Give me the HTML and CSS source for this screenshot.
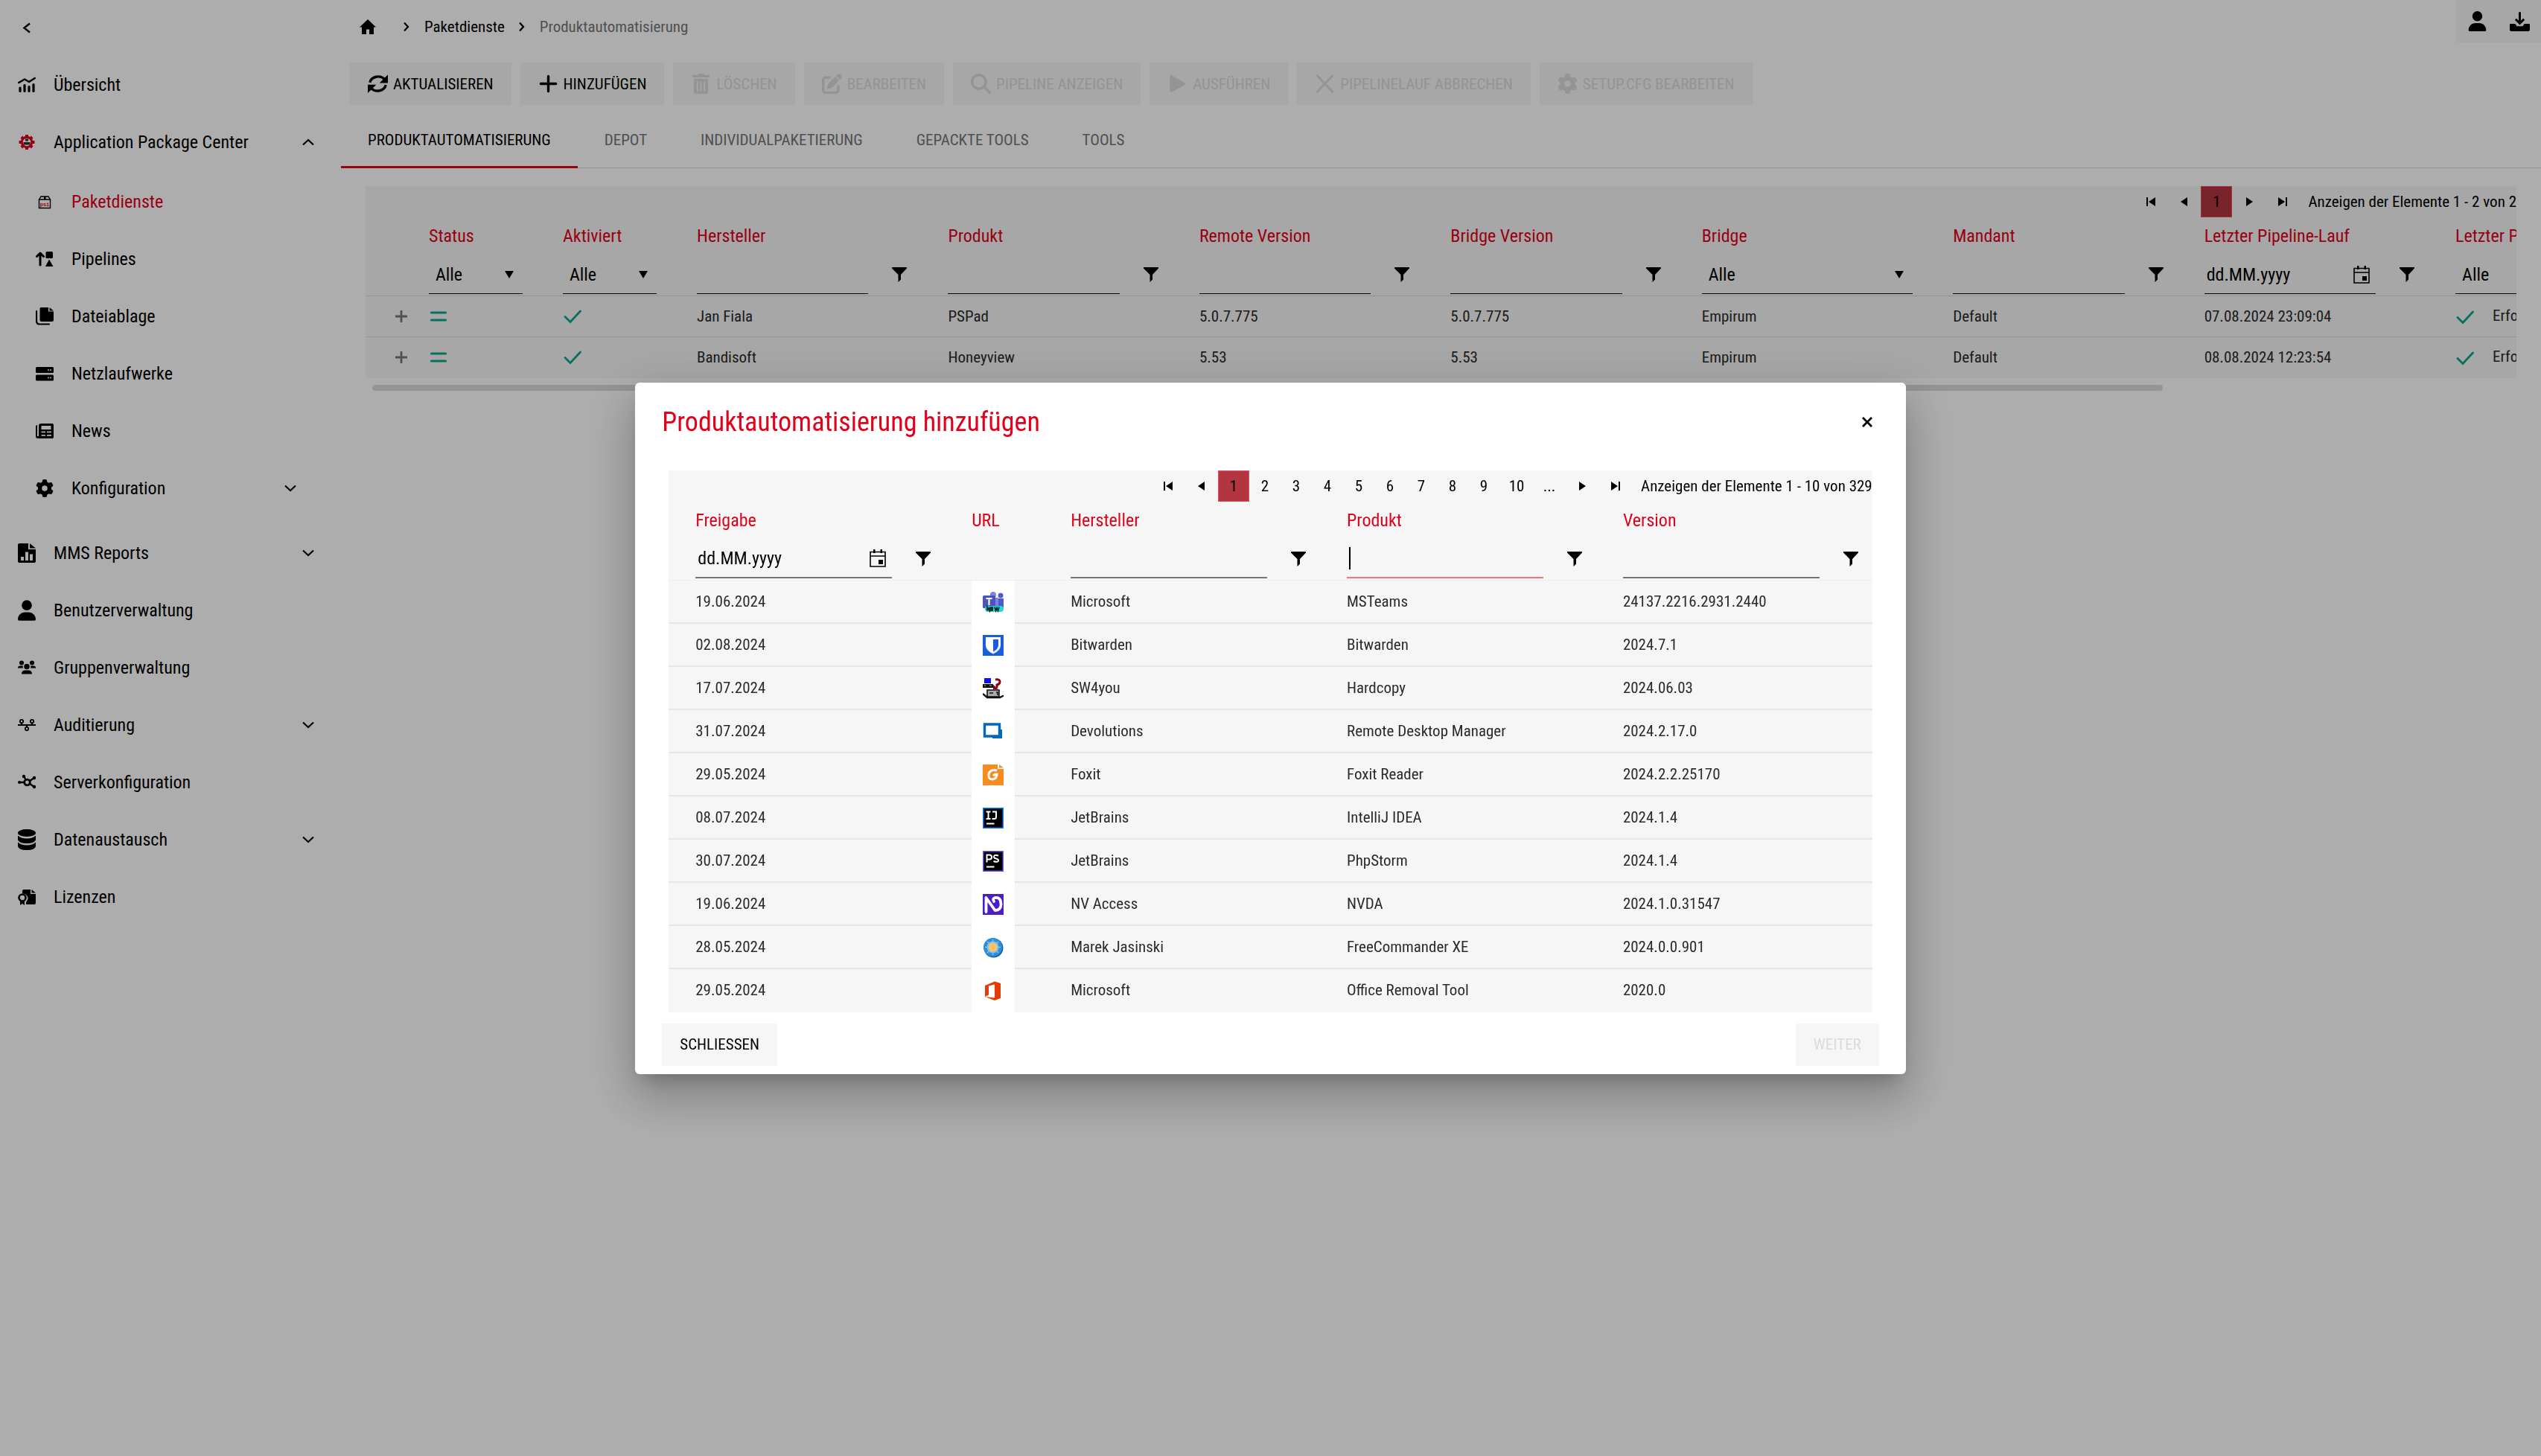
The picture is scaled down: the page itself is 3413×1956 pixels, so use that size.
FILE: index.html
```html
<!DOCTYPE html>
<html lang="de">
<head>
    <meta charset="UTF-8">
    <title>Produktautomatisierung</title>

    <link rel="stylesheet" href="styles.css">
</head>

<body>

    <!-- icon sprite -->
    <svg class="sprite" aria-hidden="true">
        <symbol id="i-left" viewBox="0 0 24 24"><path d="M16 6.500 8.500 12.500l7.500 6" fill="none" stroke="currentColor" stroke-width="2.400"/></symbol>
        <symbol id="i-right" viewBox="0 0 24 24"><path d="M9 6.500l5 5.500-5 5.500" fill="none" stroke="currentColor" stroke-width="2.200"/></symbol>
        <symbol id="i-down" viewBox="0 0 24 24"><path d="M5 8.500l7 6.500 7-6.500" fill="none" stroke="currentColor" stroke-width="2.200"/></symbol>
        <symbol id="i-up" viewBox="0 0 24 24"><path d="M5 15.500l7-6.500 7 6.500" fill="none" stroke="currentColor" stroke-width="2.200"/></symbol>
        <symbol id="i-chart" viewBox="0 0 24 24">
            <path d="M1.300 9 9 4.500l6 3.500 7.700-5" fill="none" stroke="currentColor" stroke-width="2.600" stroke-linecap="round" stroke-linejoin="round"/>
            <path d="M3 16v4.500M9 12.500v8M15 14.500v6M21 11.500v9" stroke="currentColor" stroke-width="3.200" stroke-linecap="round"/>
        </symbol>
        <symbol id="i-apc" viewBox="0 0 24 24">
            <circle cx="12" cy="12" r="6.800" fill="none" stroke="#e2001a" stroke-width="3"/>
            <path d="M12 2v4M12 18v4M1.500 12h4M18.500 12h4M4.800 5l2.800 2.800M16.400 16.200l2.800 2.800M4.800 19l2.800-2.800M16.400 7.800l2.800-2.800" stroke="#e2001a" stroke-width="4"/>
            <path d="M10 7.500h4v3h-4zM7.500 12h9v3.500h-9z" fill="#333"/>
        </symbol>
        <symbol id="i-box" viewBox="0 0 24 24">
            <path d="M4.500 9h15v11.500h-15zM4.500 9 7 5h10l2.500 4" fill="none" stroke="#000" stroke-width="1.400"/>
            <path d="M11 5h2.500v4H11z" fill="#000"/>
            <text x="12" y="17.500" text-anchor="middle" font-family="Liberation Mono, monospace" font-size="7" font-weight="bold" fill="#e2001a">psi</text>
        </symbol>
        <symbol id="i-pipes" viewBox="0 0 24 24">
            <path d="M6 20V5M1.500 8.500 6 4l4.500 4.500" fill="none" stroke="currentColor" stroke-width="3" stroke-linecap="round" stroke-linejoin="round"/>
            <rect x="13.500" y="2" width="9.500" height="9" rx="1.500"/>
            <path d="M18 12.500 23.500 22h-10.500z"/>
        </symbol>
        <symbol id="i-files" viewBox="0 0 24 24">
            <path d="M7 0h10v5.500h7V17q0 2-2 2H7.500q-2 0-2-2V2q0-2 1.500-2z"/>
            <path d="M18.500 0 24 4.500h-5.500z"/>
            <path d="M1 5v13q0 4.500 4.500 4.500H18" fill="none" stroke="currentColor" stroke-width="2.200" stroke-linecap="round"/>
        </symbol>
        <symbol id="i-server" viewBox="0 0 24 24">
            <path d="M1.500 3h21q1.500 0 1.500 1.500v5q0 1.500-1.500 1.500h-21Q0 11 0 9.500v-5Q0 3 1.500 3zM1.500 13.500h21q1.500 0 1.500 1.500v5q0 1.500-1.500 1.500h-21Q0 21.500 0 20v-5q0-1.500 1.500-1.500z"/>
            <g fill="#fff"><circle cx="17" cy="7" r="1"/><circle cx="20" cy="7" r="1"/><circle cx="17" cy="17.500" r="1"/><circle cx="20" cy="17.500" r="1"/></g>
        </symbol>
        <symbol id="i-news" viewBox="0 0 24 24">
            <path fill-rule="evenodd" d="M7 2h15q2 0 2 2v16q0 2-2 2H3q-3 0-3-3V6q0-2 2-2v15h2V5q0-3 3-3zM7.500 5v5h13V5zM7.500 12.500v1.800h5.500v-1.800zM15 12.500v1.800h6v-1.800zM7.500 17v1.800h5.500V17zM15 17v1.800h6V17z"/>
        </symbol>
        <symbol id="i-gear" viewBox="0 0 512 512"><path d="M495.900 166.600c3.200 8.700.5 18.400-6.400 24.600l-43.300 39.400c1.100 8.300 1.700 16.800 1.700 25.400s-.6 17.100-1.700 25.400l43.300 39.400c6.900 6.200 9.600 15.900 6.400 24.600-4.400 11.900-9.700 23.300-15.800 34.300l-4.700 8.100c-6.600 11-14 21.400-22.100 31.200-5.900 7.200-15.700 9.600-24.500 6.800l-55.700-17.700c-13.400 10.300-28.200 18.900-44 25.400l-12.500 57.100c-2 9.100-9 16.300-18.200 17.800-13.800 2.300-28 3.500-42.500 3.500s-28.700-1.200-42.500-3.500c-9.200-1.500-16.200-8.700-18.200-17.800l-12.500-57.100c-15.800-6.500-30.600-15.100-44-25.400l-55.700 17.800c-8.800 2.800-18.600.3-24.500-6.800-8.100-9.800-15.500-20.200-22.100-31.200l-4.700-8.100c-6.100-11-11.400-22.400-15.800-34.300-3.200-8.700-.5-18.400 6.400-24.600l43.300-39.400C64.600 273.100 64 264.600 64 256s.6-17.100 1.700-25.400L22.400 191.200c-6.900-6.200-9.600-15.900-6.400-24.600 4.400-11.900 9.700-23.300 15.800-34.300l4.700-8.100c6.600-11 14-21.400 22.100-31.200 5.900-7.200 15.700-9.600 24.500-6.800l55.700 17.700c13.400-10.300 28.200-18.900 44-25.400l12.500-57.100c2-9.100 9-16.300 18.200-17.800C227.300 1.200 241.500 0 256 0s28.700 1.200 42.500 3.500c9.200 1.500 16.200 8.700 18.200 17.800l12.500 57.100c15.800 6.500 30.600 15.100 44 25.400l55.700-17.700c8.800-2.800 18.600-.3 24.500 6.800 8.100 9.800 15.500 20.200 22.100 31.200l4.700 8.100c6.100 11 11.400 22.400 15.800 34.300zM256 336a80 80 0 1 0 0-160 80 80 0 1 0 0 160z"/></symbol>
        <symbol id="i-report" viewBox="0 0 24 28">
            <path fill-rule="evenodd" d="M2 1h12v8h10v16q0 2-2 2H2q-2 0-2-2V3q0-2 2-2zM4 19v5h4v-5zM10 12.500V24h4V12.500zM16 15.500V24h4v-8.500z"/>
            <path d="M16 1l8 6.500h-8z"/>
        </symbol>
        <symbol id="i-user" viewBox="0 0 448 512"><path d="M224 256A128 128 0 1 0 224 0a128 128 0 1 0 0 256zm-45.700 48C79.800 304 0 383.800 0 482.300 0 498.700 13.300 512 29.700 512h388.600c16.400 0 29.700-13.300 29.700-29.700C448 383.800 368.200 304 269.700 304z"/></symbol>
        <symbol id="i-group" viewBox="0 0 24 24">
            <circle cx="5" cy="5.500" r="3"/><circle cx="19" cy="5.500" r="3"/><circle cx="12" cy="10.500" r="3.700"/>
            <path d="M0 12.500q0-3 3-3h4q-.8 1.500 0 3zM24 12.500q0-3-3-3h-4q.8 1.500 0 3zM5 20.500q0-5 5-5h4q5 0 5 5z"/>
        </symbol>
        <symbol id="i-audit" viewBox="0 0 24 24">
            <path d="M0 12h24M5 12V9M19 12V9M12 12v3" stroke="currentColor" stroke-width="2"/>
            <g fill="none" stroke="currentColor" stroke-width="1.800"><circle cx="5" cy="7" r="2.200"/><circle cx="19" cy="7" r="2.200"/><circle cx="12" cy="17" r="2.200"/></g>
        </symbol>
        <symbol id="i-nodes" viewBox="0 0 24 24">
            <path d="M2 12h7M8 4l3 5M22 6l-6 4M22 18l-6-4" stroke="currentColor" stroke-width="2.400"/>
            <circle cx="12.500" cy="12" r="3.800" fill="none" stroke="currentColor" stroke-width="2.800"/>
            <circle cx="2" cy="12" r="2"/><circle cx="8" cy="4" r="2.200"/><circle cx="22" cy="6" r="2.200"/><circle cx="22" cy="18" r="2.200"/>
        </symbol>
        <symbol id="i-db" viewBox="0 0 24 28">
            <ellipse cx="12" cy="5" rx="12" ry="5"/>
            <path d="M0 8.500q4 4 12 4t12-4V14q-1 5-12 5T0 14zM0 17.500q4 4 12 4t12-4V23q-1 5-12 5T0 23z"/>
        </symbol>
        <symbol id="i-license" viewBox="0 0 24 24">
            <path d="M8 2h9v6h7v12q0 2-2 2H11v-3q5-6 0-10-2-2-5-1.500V4q0-2 2-2z"/><path d="M18.500 2 24 6.500h-5.500z"/>
            <circle cx="6" cy="13" r="4.500" fill="#fff" stroke="currentColor" stroke-width="2.600"/><path d="M3 17.500h6V23l-3-2-3 2z"/>
        </symbol>
        <symbol id="i-home" viewBox="0 0 24 24"><path d="M12 2 1 12.500h3V22h6v-6.500h4V22h6v-9.500h3z"/></symbol>
        <symbol id="i-refresh" viewBox="0 0 24 24">
            <path d="M2.500 10.500a10 8.500 0 0 1 17.500-4M21.500 13.500a10 8.500 0 0 1-17.500 4" fill="none" stroke="currentColor" stroke-width="3"/>
            <path d="M24 1v10H14zM0 23V13h10z"/>
        </symbol>
        <symbol id="i-plus" viewBox="0 0 24 24"><path d="M12 3v18M3 12h18" stroke="currentColor" stroke-width="3" stroke-linecap="round"/></symbol>
        <symbol id="i-trash" viewBox="0 0 24 24"><path fill-rule="evenodd" d="M9 0h6l1 1.500h6v3H2v-3h6zM3.500 6h17v16q0 2-2 2h-13q-2 0-2-2zM7 9v12h1.500V9zM11.200 9v12h1.500V9zM15.500 9v12H17V9z"/></symbol>
        <symbol id="i-edit" viewBox="0 0 512 512"><path d="M471.600 21.700c-21.900-21.900-57.300-21.900-79.200 0l-30.100 30 97.900 97.900 30.100-30.100c21.900-21.900 21.900-57.300 0-79.200zm-299.200 220c-6.100 6.100-10.800 13.600-13.500 21.900l-29.600 88.800c-2.900 8.600-.6 18.100 5.800 24.600s15.900 8.700 24.600 5.800l88.800-29.600c8.200-2.700 15.700-7.400 21.900-13.500l167.300-167.400-98-98zM96 64C43 64 0 107 0 160v256c0 53 43 96 96 96h256c53 0 96-43 96-96v-96c0-17.700-14.300-32-32-32s-32 14.300-32 32v96c0 17.700-14.300 32-32 32H96c-17.700 0-32-14.300-32-32V160c0-17.700 14.300-32 32-32h96c17.700 0 32-14.300 32-32s-14.300-32-32-32z"/></symbol>
        <symbol id="i-search" viewBox="0 0 512 512"><path d="M416 208c0 45.900-14.900 88.300-40 122.700l126.600 126.700c12.500 12.500 12.500 32.800 0 45.300s-32.800 12.500-45.300 0L330.700 376c-34.400 25.200-76.800 40-122.700 40C93.100 416 0 322.900 0 208S93.100 0 208 0s208 93.100 208 208zM208 352a144 144 0 1 0 0-288 144 144 0 1 0 0 288z"/></symbol>
        <symbol id="i-play" viewBox="0 0 24 24"><path d="M3 3q0-2 2-1l16 9q1.500 1 0 2L5 22q-2 1-2-1z"/></symbol>
        <symbol id="i-x" viewBox="0 0 24 24"><path d="M3 2.500l18 19M21 2.500l-18 19" stroke="currentColor" stroke-width="2.600" stroke-linecap="round"/></symbol>
        <symbol id="i-close" viewBox="0 0 16 16"><path d="M2 2l12 12M14 2 2 14" stroke="currentColor" stroke-width="2.800"/></symbol>
        <symbol id="i-download" viewBox="0 0 24 24">
            <path d="M12 1v13M7 9.500l5 5 5-5" fill="none" stroke="currentColor" stroke-width="2.600"/>
            <path d="M1 15h5.500l2 3h7l2-3H23q1 0 1 1v6q0 2-2 2H2q-2 0-2-2v-6q0-1 1-1z"/>
        </symbol>
        <symbol id="i-first" viewBox="0 0 16 16"><path d="M2 2h2v12H2zM14 2v12L5 8z"/></symbol>
        <symbol id="i-prev" viewBox="0 0 16 16"><path d="M12 2v12L3 8z"/></symbol>
        <symbol id="i-next" viewBox="0 0 16 16"><path d="M4 2v12l9-6z"/></symbol>
        <symbol id="i-last" viewBox="0 0 16 16"><path d="M12 2h2v12h-2zM2 2v12l9-6z"/></symbol>
        <symbol id="i-caret" viewBox="0 0 12 10"><path d="M0 0h12L6 10z"/></symbol>
        <symbol id="i-filter" viewBox="0 0 20 22"><path d="M0 1h20v1.500L12 11v6.500L8.500 21V11L0 2.500z"/></symbol>
        <symbol id="i-calendar" viewBox="0 0 22 24">
            <path d="M1 3.500h20V23H1zM1 9h20" fill="none" stroke="currentColor" stroke-width="1.600"/><path d="M5 0h2.500v5H5zM14.500 0H17v5h-2.500zM12 14h6v6h-6z"/>
        </symbol>
        <symbol id="i-expand" viewBox="0 0 24 24"><path d="M12 4v16M4 12h16" stroke="currentColor" stroke-width="2.800"/></symbol>
        <symbol id="i-equal" viewBox="0 0 24 24"><path d="M2.500 7h19M2.500 17h19" stroke="currentColor" stroke-width="3.200" stroke-linecap="round"/></symbol>
        <symbol id="i-check" viewBox="0 0 24 24"><path d="M2 12.500l7 7L22.500 5" fill="none" stroke="currentColor" stroke-width="2.800" stroke-linecap="round"/></symbol>
    </svg>

    <div class="app">

        <nav class="sidebar">
            <button class="collapse" aria-label="Menü einklappen"><svg><use href="#i-left"/></svg></button>

            <a class="nav-item" href="#"><svg><use href="#i-chart"/></svg><span>Übersicht</span></a>
            <a class="nav-item" href="#"><svg><use href="#i-apc"/></svg><span>Application Package Center</span><svg class="chevron"><use href="#i-up"/></svg></a>

            <div class="subnav">
                <a class="nav-item active" href="#"><svg><use href="#i-box"/></svg><span>Paketdienste</span></a>
                <a class="nav-item" href="#"><svg><use href="#i-pipes"/></svg><span>Pipelines</span></a>
                <a class="nav-item" href="#"><svg><use href="#i-files"/></svg><span>Dateiablage</span></a>
                <a class="nav-item" href="#"><svg><use href="#i-server"/></svg><span>Netzlaufwerke</span></a>
                <a class="nav-item" href="#"><svg><use href="#i-news"/></svg><span>News</span></a>
                <a class="nav-item" href="#"><svg><use href="#i-gear"/></svg><span>Konfiguration</span><svg class="chevron"><use href="#i-down"/></svg></a>
            </div>

            <a class="nav-item" href="#"><svg class="tall"><use href="#i-report"/></svg><span>MMS Reports</span><svg class="chevron"><use href="#i-down"/></svg></a>
            <a class="nav-item" href="#"><svg class="tall"><use href="#i-user"/></svg><span>Benutzerverwaltung</span></a>
            <a class="nav-item" href="#"><svg><use href="#i-group"/></svg><span>Gruppenverwaltung</span></a>
            <a class="nav-item" href="#"><svg><use href="#i-audit"/></svg><span>Auditierung</span><svg class="chevron"><use href="#i-down"/></svg></a>
            <a class="nav-item" href="#"><svg><use href="#i-nodes"/></svg><span>Serverkonfiguration</span></a>
            <a class="nav-item" href="#"><svg class="tall"><use href="#i-db"/></svg><span>Datenaustausch</span><svg class="chevron"><use href="#i-down"/></svg></a>
            <a class="nav-item" href="#"><svg><use href="#i-license"/></svg><span>Lizenzen</span></a>
        </nav>

        <main class="content">
            <header class="topbar">
                <div class="breadcrumb">
                    <a href="#" aria-label="Start"><svg><use href="#i-home"/></svg></a>
                    <svg class="sep"><use href="#i-right"/></svg>
                    <a href="#">Paketdienste</a>
                    <svg class="sep"><use href="#i-right"/></svg>
                    <span class="current">Produktautomatisierung</span>
                </div>
                <div class="account">
                    <button aria-label="Benutzer"><svg><use href="#i-user"/></svg></button>
                    <button aria-label="Download"><svg><use href="#i-download"/></svg></button>
                </div>
            </header>

            <div class="toolbar">
                <button class="btn"><svg><use href="#i-refresh"/></svg>AKTUALISIEREN</button>
                <button class="btn"><svg><use href="#i-plus"/></svg>HINZUFÜGEN</button>
                <button class="btn" disabled><svg><use href="#i-trash"/></svg>LÖSCHEN</button>
                <button class="btn" disabled><svg><use href="#i-edit"/></svg>BEARBEITEN</button>
                <button class="btn" disabled><svg><use href="#i-search"/></svg>PIPELINE ANZEIGEN</button>
                <button class="btn" disabled><svg><use href="#i-play"/></svg>AUSFÜHREN</button>
                <button class="btn" disabled><svg><use href="#i-x"/></svg>PIPELINELAUF ABBRECHEN</button>
                <button class="btn" disabled><svg><use href="#i-gear"/></svg>SETUP.CFG BEARBEITEN</button>
            </div>

            <div class="tabs">
                <button class="tab selected">PRODUKTAUTOMATISIERUNG</button>
                <button class="tab">DEPOT</button>
                <button class="tab">INDIVIDUALPAKETIERUNG</button>
                <button class="tab">GEPACKTE TOOLS</button>
                <button class="tab">TOOLS</button>
            </div>

            <section class="grid main-grid">
                <div class="pager">
                    <button class="arrow" aria-label="Erste Seite"><svg><use href="#i-first"/></svg></button>
                    <button class="arrow" aria-label="Vorherige Seite"><svg><use href="#i-prev"/></svg></button>
                    <button class="page current">1</button>
                    <button class="arrow" aria-label="Nächste Seite"><svg><use href="#i-next"/></svg></button>
                    <button class="arrow" aria-label="Letzte Seite"><svg><use href="#i-last"/></svg></button>
                    <span class="info">Anzeigen der Elemente 1 - 2 von 2</span>
                </div>
                <table class="packages">
                    <colgroup><col class="col-expand"><col class="col-small"><col class="col-small"><col><col><col><col><col><col><col><col><col></colgroup>
                    <thead>
                        <tr class="titles">
                            <th></th><th>Status</th><th>Aktiviert</th><th>Hersteller</th><th>Produkt</th><th>Remote Version</th><th>Bridge Version</th><th>Bridge</th><th>Mandant</th><th>Letzter Pipeline-Lauf</th><th>Letzter Pipeline-Status</th><th></th>
                        </tr>
                        <tr class="filters">
                            <td></td>
                            <td><div class="field select-field"><select aria-label="Status"><option>Alle</option></select><svg><use href="#i-caret"/></svg></div></td>
                            <td><div class="field select-field"><select aria-label="Aktiviert"><option>Alle</option></select><svg><use href="#i-caret"/></svg></div></td>
                            <td><div class="filter"><div class="field"><input type="text" aria-label="Hersteller"></div><button aria-label="Filter"><svg><use href="#i-filter"/></svg></button></div></td>
                            <td><div class="filter"><div class="field"><input type="text" aria-label="Produkt"></div><button aria-label="Filter"><svg><use href="#i-filter"/></svg></button></div></td>
                            <td><div class="filter"><div class="field"><input type="text" aria-label="Remote Version"></div><button aria-label="Filter"><svg><use href="#i-filter"/></svg></button></div></td>
                            <td><div class="filter"><div class="field"><input type="text" aria-label="Bridge Version"></div><button aria-label="Filter"><svg><use href="#i-filter"/></svg></button></div></td>
                            <td><div class="field select-field"><select aria-label="Bridge"><option>Alle</option></select><svg><use href="#i-caret"/></svg></div></td>
                            <td><div class="filter"><div class="field"><input type="text" aria-label="Mandant"></div><button aria-label="Filter"><svg><use href="#i-filter"/></svg></button></div></td>
                            <td><div class="filter"><div class="field"><input type="text" aria-label="Letzter Pipeline-Lauf" value="dd.MM.yyyy"><svg class="cal"><use href="#i-calendar"/></svg></div><button aria-label="Filter"><svg><use href="#i-filter"/></svg></button></div></td>
                            <td><div class="field select-field"><select aria-label="Letzter Pipeline-Status"><option>Alle</option></select></div></td>
                            <td></td>
                        </tr>
                    </thead>
                    <tbody>
                        <tr>
                            <td class="expand"><svg><use href="#i-expand"/></svg></td>
                            <td class="ok"><svg><use href="#i-equal"/></svg></td>
                            <td class="ok"><svg><use href="#i-check"/></svg></td>
                            <td>Jan Fiala</td><td>PSPad</td><td>5.0.7.775</td><td>5.0.7.775</td><td>Empirum</td><td>Default</td><td>07.08.2024 23:09:04</td>
                            <td class="state"><svg><use href="#i-check"/></svg>Erfolgreich</td><td></td>
                        </tr>
                        <tr>
                            <td class="expand"><svg><use href="#i-expand"/></svg></td>
                            <td class="ok"><svg><use href="#i-equal"/></svg></td>
                            <td class="ok"><svg><use href="#i-check"/></svg></td>
                            <td>Bandisoft</td><td>Honeyview</td><td>5.53</td><td>5.53</td><td>Empirum</td><td>Default</td><td>08.08.2024 12:23:54</td>
                            <td class="state"><svg><use href="#i-check"/></svg>Erfolgreich</td><td></td>
                        </tr>
                    </tbody>
                </table>
            </section>
            <div class="scrollbar"><div class="thumb"></div></div>
        </main>
    </div>

    <div class="backdrop">
        <div class="dialog" role="dialog" aria-labelledby="dialog-title">
            <div class="dialog-head">
                <h2 id="dialog-title">Produktautomatisierung hinzufügen</h2>
                <button class="close" aria-label="Schließen"><svg><use href="#i-close"/></svg></button>
            </div>

            <section class="grid">
                <div class="pager">
                    <button class="arrow" aria-label="Erste Seite"><svg><use href="#i-first"/></svg></button>
                    <button class="arrow" aria-label="Vorherige Seite"><svg><use href="#i-prev"/></svg></button>
                    <button class="page current">1</button>
                    <button class="page">2</button>
                    <button class="page">3</button>
                    <button class="page">4</button>
                    <button class="page">5</button>
                    <button class="page">6</button>
                    <button class="page">7</button>
                    <button class="page">8</button>
                    <button class="page">9</button>
                    <button class="page wide">10</button>
                    <button class="page">...</button>
                    <button class="arrow" aria-label="Nächste Seite"><svg><use href="#i-next"/></svg></button>
                    <button class="arrow" aria-label="Letzte Seite"><svg><use href="#i-last"/></svg></button>
                    <span class="info">Anzeigen der Elemente 1 - 10 von 329</span>
                </div>
                <table class="products">
                    <colgroup><col><col class="col-url"><col><col><col></colgroup>
                    <thead>
                        <tr class="titles">
                            <th>Freigabe</th><th>URL</th><th>Hersteller</th><th>Produkt</th><th>Version</th>
                        </tr>
                        <tr class="filters">
                            <td><div class="filter"><div class="field"><input type="text" aria-label="Freigabe" value="dd.MM.yyyy"><svg class="cal"><use href="#i-calendar"/></svg></div><button aria-label="Filter"><svg><use href="#i-filter"/></svg></button></div></td>
                            <td></td>
                            <td><div class="filter"><div class="field"><input type="text" aria-label="Hersteller"></div><button aria-label="Filter"><svg><use href="#i-filter"/></svg></button></div></td>
                            <td><div class="filter"><div class="field focused"><span class="cursor"></span><input type="text" aria-label="Produkt"></div><button aria-label="Filter"><svg><use href="#i-filter"/></svg></button></div></td>
                            <td><div class="filter"><div class="field"><input type="text" aria-label="Version"></div><button aria-label="Filter"><svg><use href="#i-filter"/></svg></button></div></td>
                        </tr>
                    </thead>
                    <tbody>
                        <tr>
                            <td>19.06.2024</td>
                            <td class="url"><a href="#" aria-label="Microsoft Teams"><svg viewBox="0 0 28 28">
                                <circle cx="14" cy="4" r="4" fill="#7b83eb"/><circle cx="24" cy="5" r="3.500" fill="#5059c9"/>
                                <path d="M11 8h10v18H11z" fill="#7b83eb"/><path d="M21 9h7v12h-7z" fill="#5059c9"/>
                                <rect y="5" width="17" height="17" rx="1.500" fill="#4b53bc"/>
                                <path d="M4.500 9h8M8.500 9v9" stroke="#fff" stroke-width="2.200"/>
                                <rect x="3" y="19" width="25" height="8" rx="4" fill="#26d7d4"/>
                                <path d="M6 25.500v-5l3 5v-5M14 21h-3v4h3M11 23h3M16 20.500l1.500 5 1.500-4 1.500 4 1.500-5" fill="none" stroke="#062b2b" stroke-width="1.800"/>
                            </svg></a></td>
                            <td>Microsoft</td><td>MSTeams</td><td>24137.2216.2931.2440</td>
                        </tr>
                        <tr>
                            <td>02.08.2024</td>
                            <td class="url"><a href="#" aria-label="Bitwarden"><svg viewBox="0 0 28 28">
                                <path d="M0 0h28v28H0z" fill="#175ddc"/><path d="M4 3h20v11q0 7-10 11.500Q4 21 4 14z" fill="#fff"/><path d="M14 6h7v8q0 5-7 8.500z" fill="#175ddc"/>
                            </svg></a></td>
                            <td>Bitwarden</td><td>Bitwarden</td><td>2024.7.1</td>
                        </tr>
                        <tr>
                            <td>17.07.2024</td>
                            <td class="url"><a href="#" aria-label="Hardcopy"><svg viewBox="0 0 28 28">
                                <path d="M2 0h9v7H2z" fill="#1010f0"/><path d="M0 8h14v5H0z" fill="#111"/><path d="M2 10h2M9 10h3" stroke="#bbb"/>
                                <path d="M17 2q6-1 6 3 0 3-4 4v4" fill="none" stroke="#8b0010" stroke-width="3"/><path d="M14 9v6h7z" fill="#8b0010"/>
                                <path d="M6 16h16v9H6z" fill="#aaa" stroke="#111" stroke-width="1.600"/><path d="M9 20h5M18 19h2v4" fill="none" stroke="#111" stroke-width="1.500"/>
                                <path d="M0 21l6 5h17l5-2.500" fill="none" stroke="#111" stroke-width="2.400"/>
                            </svg></a></td>
                            <td>SW4you</td><td>Hardcopy</td><td>2024.06.03</td>
                        </tr>
                        <tr>
                            <td>31.07.2024</td>
                            <td class="url"><a href="#" aria-label="Remote Desktop Manager"><svg viewBox="0 0 28 28">
                                <path d="M13 11h13v12H13z" fill="#0068c3"/><path d="M2.500 4h20v16h-20z" fill="#fff" stroke="#0068c3" stroke-width="3.400"/>
                            </svg></a></td>
                            <td>Devolutions</td><td>Remote Desktop Manager</td><td>2024.2.17.0</td>
                        </tr>
                        <tr>
                            <td>29.05.2024</td>
                            <td class="url"><a href="#" aria-label="Foxit Reader"><svg viewBox="0 0 28 28">
                                <path d="M0 0h20v6h8v22H0z" fill="#f68b1f"/><path d="M22 0l6 4.500h-6z" fill="#f68b1f"/>
                                <path d="M19 8q-9-2-11 5-1 7 5 7 6-1 6-7-3 0-5 2" fill="none" stroke="#fff" stroke-width="3"/>
                            </svg></a></td>
                            <td>Foxit</td><td>Foxit Reader</td><td>2024.2.2.25170</td>
                        </tr>
                        <tr>
                            <td>08.07.2024</td>
                            <td class="url"><a href="#" aria-label="IntelliJ IDEA"><svg viewBox="0 0 28 28">
                                <path d="M0 0h28v28H0z" fill="#087cfa"/><path d="M1.500 1.500h25v25h-25z" fill="#000"/>
                                <path d="M4.500 5.500h6M7.500 5.500v9M4.500 15h6M13 5.500h5v7q0 2.500-2.500 2.500H12.500M5 21.500h10.500" fill="none" stroke="#fff" stroke-width="2"/>
                            </svg></a></td>
                            <td>JetBrains</td><td>IntelliJ IDEA</td><td>2024.1.4</td>
                        </tr>
                        <tr>
                            <td>30.07.2024</td>
                            <td class="url"><a href="#" aria-label="PhpStorm"><svg viewBox="0 0 28 28">
                                <path d="M0 0h28v28H0z" fill="#7b50f0"/><path d="M1.500 1.500h25v25h-25z" fill="#000"/>
                                <path d="M5.500 15.500V5.500h3.500q3 0 3 3t-3 3H5.500M21 6.500q-6-2-6 1.500 0 2 3 2.500t3 2.500q0 3-6.500 1M5 21.500h10.500" fill="none" stroke="#fff" stroke-width="2"/>
                            </svg></a></td>
                            <td>JetBrains</td><td>PhpStorm</td><td>2024.1.4</td>
                        </tr>
                        <tr>
                            <td>19.06.2024</td>
                            <td class="url"><a href="#" aria-label="NVDA"><svg viewBox="0 0 28 28">
                                <path d="M0 0h28v28H0z" fill="#4c1cc4"/>
                                <path d="M4.500 24V5l12 17q8 0 8-8 0-10-8-9-4 1-1.500 5" fill="none" stroke="#fff" stroke-width="3.800" stroke-linejoin="round" stroke-linecap="round"/>
                            </svg></a></td>
                            <td>NV Access</td><td>NVDA</td><td>2024.1.0.31547</td>
                        </tr>
                        <tr>
                            <td>28.05.2024</td>
                            <td class="url"><a href="#" aria-label="FreeCommander"><svg viewBox="0 0 28 28">
                                <circle cx="14.500" cy="14.500" r="13" fill="#1b5fb0"/><circle cx="13.500" cy="13.500" r="12.500" fill="#2e8fd8"/>
                                <circle cx="13.500" cy="13.500" r="8" fill="#7fc0ec"/>
                                <path d="M13.500 3v21M3 13.500h21M6 6l15 15M21 6 6 21" stroke="#7fc0ec" stroke-width="1.600"/><circle cx="13.500" cy="13.500" r="6" fill="#fdc268"/>
                            </svg></a></td>
                            <td>Marek Jasinski</td><td>FreeCommander XE</td><td>2024.0.0.901</td>
                        </tr>
                        <tr>
                            <td>29.05.2024</td>
                            <td class="url"><a href="#" aria-label="Office Removal Tool"><svg viewBox="0 0 28 28">
                                <path d="M3 7 16 1.500l8 2.500v20l-8 3L3 22l13 1.500V5.500L8 7.500v12L3 22z" fill="#e43c07"/>
                            </svg></a></td>
                            <td>Microsoft</td><td>Office Removal Tool</td><td>2020.0</td>
                        </tr>
                    </tbody>
                </table>
            </section>

            <div class="dialog-actions">
                <button class="btn">SCHLIESSEN</button>
                <button class="btn" disabled>WEITER</button>
            </div>
        </div>
    </div>

</body>
</html>
```

FILE: styles.css
```css
* {
    box-sizing: border-box;
}

body {
    margin: 0;
    font-family: "Roboto Condensed", Roboto, "Liberation Sans Narrow", sans-serif;
    font-size: 21px;
    color: #000;
    background: #fff;
}

button, input, select {
    font: inherit;
    color: inherit;
    background: none;
    border: none;
    border-radius: 0;
    padding: 0;
    margin: 0;
    outline: none;
}

a {
    color: inherit;
    text-decoration: none;
}

svg {
    display: block;
    flex: none;
    fill: currentColor;
}

.sprite {
    display: none;
}

.app {
    display: flex;
    min-height: 100vh;
}

/* sidebar */
.sidebar {
    width: 458px;
    flex: none;
    padding: 24px 0;
}

.collapse {
    display: block;
    height: 26px;
    margin: 0 24px 25px;
}

.collapse svg {
    width: 24px;
    height: 26px;
}

.nav-item {
    display: flex;
    align-items: center;
    height: 77px;
    padding: 0 32px 0 24px;
    font-size: 24px;
}

.nav-item svg {
    width: 24px;
    height: 24px;
    margin-right: 24px;
}

.nav-item svg.tall {
    height: 28px;
}

.nav-item .chevron {
    width: 24px;
    margin: 0 0 0 auto;
}

.nav-item.active {
    color: #e2001a;
}

.subnav {
    padding: 3px 24px 10px;
}

/* content */
.content {
    flex: 1;
    min-width: 0;
}

.topbar {
    display: flex;
    justify-content: space-between;
    height: 84px;
}

.breadcrumb {
    display: flex;
    align-items: center;
    height: 72px;
    padding-left: 24px;
}

.breadcrumb a svg {
    width: 24px;
    height: 24px;
    margin-right: 17px;
}

.breadcrumb .sep {
    width: 24px;
    height: 24px;
    margin: 0 12px 0 11px;
}

.breadcrumb .current {
    color: #767676;
}

.account {
    display: flex;
    align-items: center;
    justify-content: space-between;
    width: 114px;
    height: 57px;
    padding: 0 15px;
    background: #f6f6f6;
}

.account svg {
    width: 27px;
    height: 27px;
}

.toolbar {
    display: flex;
    gap: 12px;
    padding: 0 12px;
}

.btn {
    display: flex;
    align-items: center;
    gap: 7px;
    height: 57px;
    padding: 0 24px;
    background: #f6f6f6;
}

.btn svg {
    width: 27px;
    height: 27px;
}

.btn:disabled {
    color: #dadada;
}

.tabs {
    display: flex;
    height: 85px;
    border-bottom: 1px solid #dadada;
}

.tab {
    height: 85px;
    padding: 12px 36px 0;
    color: #767676;
    border-bottom: 3px solid transparent;
}

.tab.selected {
    color: #000;
    border-bottom-color: #e2001a;
}

/* grids */
.grid {
    background: #f6f6f6;
    overflow: hidden;
}

.main-grid {
    margin: 24px 33px 0;
}

.pager {
    display: flex;
    justify-content: flex-end;
    align-items: center;
    height: 42px;
}

.arrow {
    display: flex;
    align-items: center;
    justify-content: center;
    width: 45px;
    height: 42px;
}

.arrow svg {
    width: 16px;
    height: 16px;
}

.page {
    width: 42px;
    height: 42px;
    text-align: center;
}

.page.wide {
    width: 46px;
}

.page.current {
    background: #b2363f;
    border: 1px solid #e2505e;
}

.info {
    margin-left: 12px;
}

table {
    width: 100%;
    table-layout: fixed;
    border-spacing: 0;
}

.packages {
    width: 3446px;
}

.col-expand {
    width: 49px;
}

.col-small {
    width: 180px;
}

.col-url {
    width: 133px;
}

th, td {
    padding: 0 0 0 36px;
    text-align: left;
    white-space: nowrap;
}

.titles th {
    height: 50px;
    font-size: 24px;
    font-weight: normal;
    color: #e2001a;
}

.filters td {
    height: 56px;
    padding: 0 18px 2px 36px;
    vertical-align: bottom;
    border-bottom: 1px solid #dadada;
}

.filter {
    display: flex;
    align-items: center;
}

.filter button {
    width: 22px;
    margin-left: 31px;
    padding-bottom: 2px;
}

.filter button svg {
    width: 20px;
    height: 22px;
    margin: 0 auto;
}

.field {
    position: relative;
    display: flex;
    align-items: center;
    flex: 1;
    min-width: 0;
    height: 50px;
    padding: 0 8px 2px 3px;
    font-size: 24px;
    border-bottom: 1px solid #000;
}

.field input {
    flex: 1;
    min-width: 0;
    width: 100%;
}

.field .cal {
    width: 22px;
    height: 24px;
}

.select-field {
    padding: 0 0 2px 9px;
}

.select-field select {
    appearance: none;
    width: 100%;
    height: 46px;
}

.select-field svg {
    position: absolute;
    right: 12px;
    width: 12px;
    height: 10px;
    pointer-events: none;
}

tbody td {
    height: 55px;
    color: #2b2b2b;
    border-bottom: 1px solid #dadada;
}

tbody tr:last-child td {
    border-bottom-color: transparent;
}

tbody td svg {
    width: 26px;
    height: 24px;
}

.expand {
    padding-left: 35px;
    color: #767676;
}

.ok svg, .state svg {
    color: #0ba58f;
}

.state svg {
    display: inline-block;
    vertical-align: middle;
    margin-right: 24px;
}

.scrollbar {
    margin: 9px 33px 0;
    padding: 0 17px 0 9px;
}

.thumb {
    width: 84%;
    height: 8px;
    border-radius: 4px;
    background: #dadada;
}

/* dialog */
.backdrop {
    position: fixed;
    inset: 0;
    display: flex;
    align-items: center;
    justify-content: center;
    background: rgba(0, 0, 0, 0.32);
}

.dialog {
    width: 50vw;
    padding: 0 36px 11px;
    background: #fff;
    border-radius: 6px;
    box-shadow: 0 16px 22px -10px rgba(0, 0, 0, 0.2), 0 36px 57px 4px rgba(0, 0, 0, 0.14), 0 14px 69px 12px rgba(0, 0, 0, 0.12);
}

.dialog-head {
    display: flex;
    align-items: center;
    justify-content: space-between;
    height: 106px;
    margin-bottom: 12px;
}

.dialog-head h2 {
    margin: 0;
    font-size: 36px;
    font-weight: normal;
    color: #e2001a;
}

.close {
    margin-right: 8px;
}

.close svg {
    width: 16px;
    height: 16px;
}

.dialog .grid {
    margin: 0 9px;
}

.dialog .field {
    border-bottom: 2px solid #767676;
}

.dialog .field.focused {
    border-bottom-color: #f0727e;
}

.cursor {
    position: absolute;
    left: 3px;
    width: 2px;
    height: 30px;
    background: #000;
}

.dialog .filters td {
    border-bottom: 1px solid #eee;
}

.dialog tbody td {
    height: 58px;
    border-bottom: 2px solid #e6e6e6;
}

.dialog tbody tr:last-child td {
    border-bottom-color: transparent;
}

.url a {
    display: flex;
    align-items: center;
    justify-content: center;
    width: 58px;
    height: 58px;
    margin-bottom: -2px;
    background: #fff;
}

.url svg {
    width: 28px;
    height: 28px;
}

.dialog-actions {
    display: flex;
    justify-content: space-between;
    margin-top: 15px;
}
```
